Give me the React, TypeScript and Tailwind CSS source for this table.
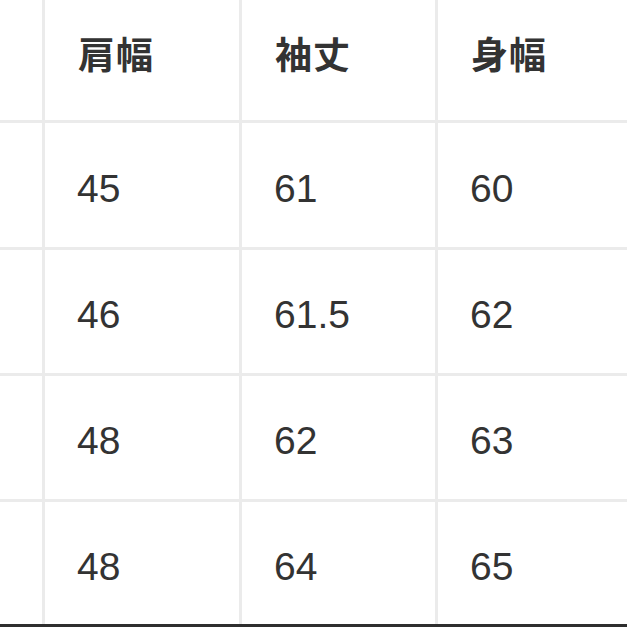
import React from 'react';

const headers = ['肩幅', '袖丈', '身幅'];
const rows = [
  ['45', '61', '60'],
  ['46', '61.5', '62'],
  ['48', '62', '63'],
  ['48', '64', '65'],
];
const rowHeights = ['h-[124px]', 'h-[123px]', 'h-[123px]', 'h-[122px]'];

export default function App() {
  return (
    <div className="w-[627px] h-[627px] bg-white overflow-hidden text-[#333333]">
      <div className="grid grid-cols-[42px_194px_193px_1fr] gap-[3px] bg-[#ebebeb] border-b-[3px] border-[#2e2e2e]">
        <div className="bg-white h-[120px]" />
        {headers.map((h) => (
          <div
            key={h}
            className="bg-white h-[120px] flex items-center pl-[33px] pb-[14px] text-[37px] font-bold leading-none tracking-[1px]"
            style={{ fontFamily: '"Noto Sans CJK JP", "Noto Sans", sans-serif' }}
          >
            {h}
          </div>
        ))}
        {rows.map((r, i) => (
          <React.Fragment key={i}>
            <div className={`bg-white ${rowHeights[i]}`} />
            {r.map((v, j) => (
              <div
                key={j}
                className={`bg-white ${rowHeights[i]} flex items-center pl-[32px] pt-[6px] text-[39px] leading-none`}
                style={{ fontFamily: '"Liberation Sans", Arial, sans-serif' }}
              >
                {v}
              </div>
            ))}
          </React.Fragment>
        ))}
      </div>
    </div>
  );
}
